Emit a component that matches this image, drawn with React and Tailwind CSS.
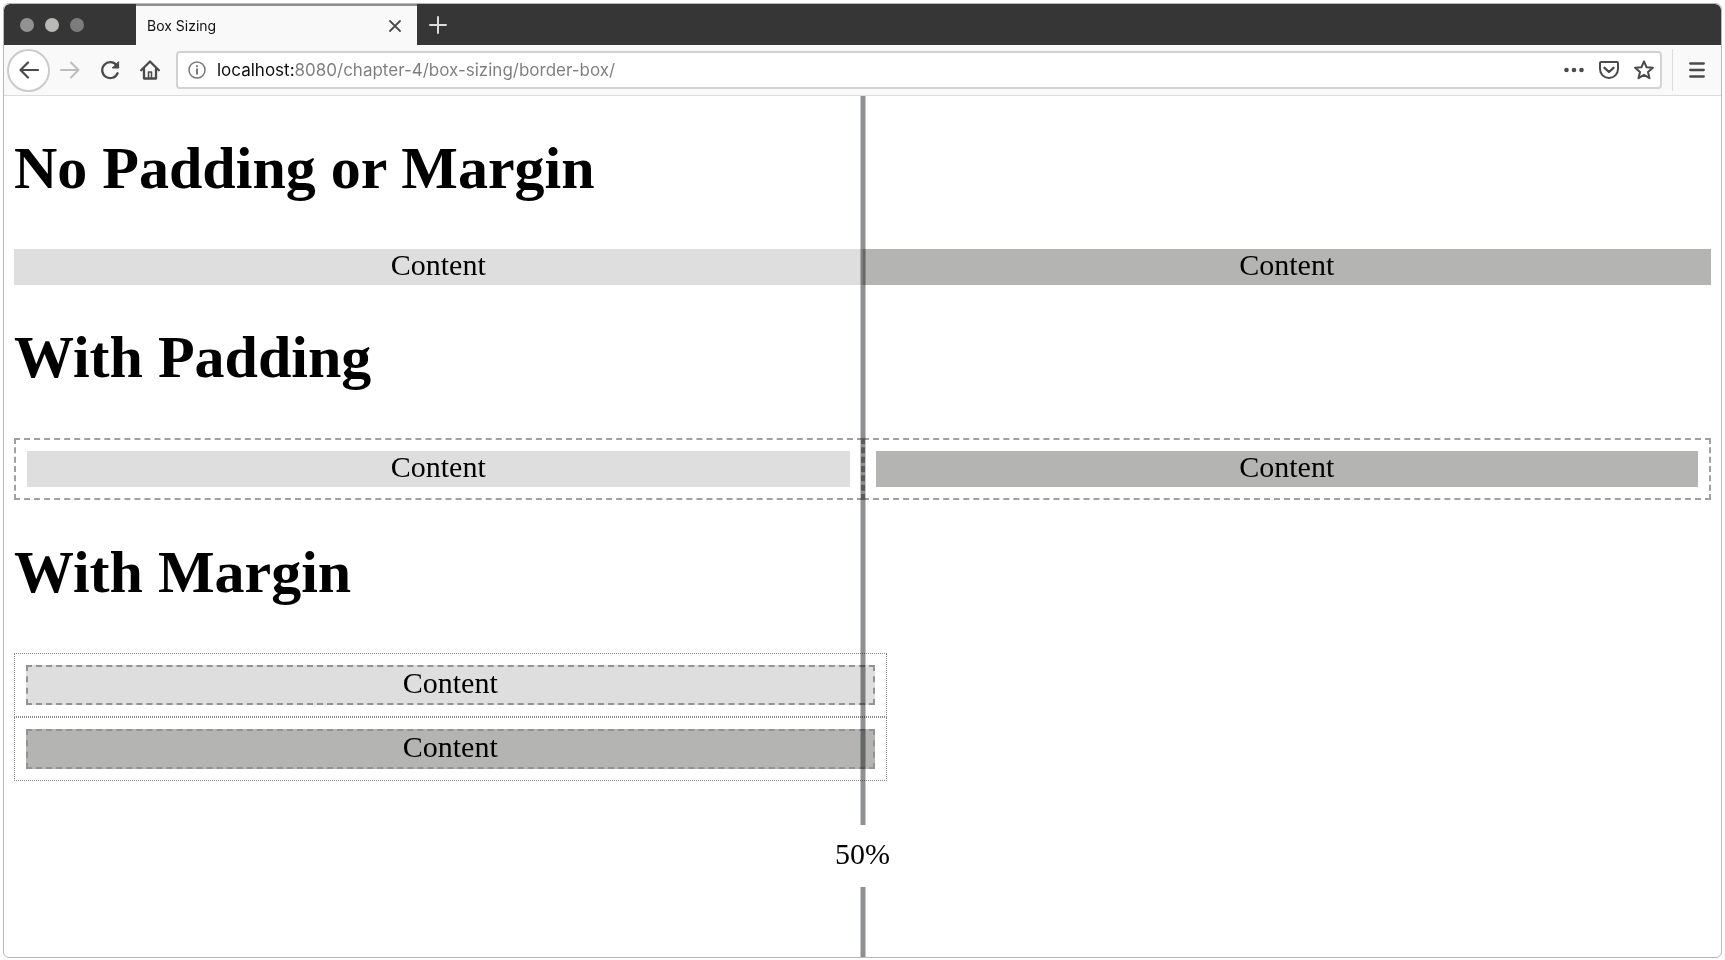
import React from "react";

const stroke = {
  fill: "none",
  stroke: "currentColor",
  strokeWidth: 2,
  strokeLinecap: "round",
  strokeLinejoin: "round",
};

function Icon({ children, className = "size-5", viewBox = "0 0 20 20", ...rest }) {
  return (
    <svg viewBox={viewBox} className={className} aria-hidden="true" {...stroke} {...rest}>
      {children}
    </svg>
  );
}

function TabBar() {
  return (
    <div className="flex h-[41px] items-stretch rounded-t-md bg-[#363636]">
      <div className="flex w-[132px] items-center gap-[11px] pl-4">
        <button aria-label="Close window" className="size-3.5 rounded-full bg-[#929292]" />
        <button aria-label="Minimize window" className="size-3.5 rounded-full bg-[#b9b9b7]" />
        <button aria-label="Zoom window" className="size-3.5 rounded-full bg-[#7c7c7c]" />
      </div>
      <div className="flex w-[281px] items-center justify-between border-t-2 border-[#8e8e8e] bg-[#f9f9fa] pr-3.5 pl-[11px] text-[#111]">
        <span className="text-sm">Box Sizing</span>
        <button aria-label="Close tab" className="text-[#4a4a4a]">
          <Icon className="size-4" viewBox="0 0 16 16" strokeWidth="1.8">
            <path d="M3 3l10 10M13 3L3 13" />
          </Icon>
        </button>
      </div>
      <button aria-label="New tab" className="px-3 text-[#dcdcdc]">
        <Icon className="size-[18px]" viewBox="0 0 18 18">
          <path d="M9 1v16M1 9h16" />
        </Icon>
      </button>
    </div>
  );
}

function Toolbar() {
  return (
    <div className="flex h-[51px] items-center border-b border-[#dcdcdc] bg-[#f9f9fa] pl-[3px] text-[#4a4a4a]">
      <button
        aria-label="Back"
        className="flex size-[43px] items-center justify-center rounded-full border-2 border-[#cbcbcb] bg-white"
      >
        <Icon strokeWidth="2.2">
          <path d="M19 10H1.5M9 2.500L1.500 10L9 17.500" />
        </Icon>
      </button>
      <button aria-label="Forward" className="ml-2 px-0.5 text-[#bdbdbd]">
        <Icon>
          <path d="M1 10h17.500M11 2.500l7.500 7.500l-7.500 7.500" />
        </Icon>
      </button>
      <button aria-label="Reload" className="ml-4 px-0.5">
        <Icon strokeWidth="2.3">
          <path d="M17.600 13.200A8 8 0 1 1 16.600 5.300L18 7" />
          <path d="M18.600 2v6h-6z" fill="currentColor" strokeWidth="1" />
        </Icon>
      </button>
      <button aria-label="Home" className="ml-4 px-0.5">
        <Icon strokeWidth="2.3">
          <path d="M1.200 10.200L10 1.500l8.800 8.700" />
          <path d="M4 9v9.500h12V9" />
          <path d="M8.500 18v-6h3v6" strokeWidth="1.600" />
        </Icon>
      </button>
      <div className="ml-3.5 flex h-[38px] grow items-center rounded-[4px] border-2 border-[#d2d2d2] bg-white pr-1.5 pl-2.5">
        <button aria-label="Site information" className="text-[#777]">
          <Icon className="size-[18px]" viewBox="0 0 18 18" strokeWidth="1.500">
            <circle cx="9" cy="9" r="8" />
            <path d="M9 8.300v4.500M9 5.100v.2" strokeWidth="2" />
          </Icon>
        </button>
        <input
          aria-label="Address"
          type="text"
          defaultValue="localhost:8080/chapter-4/box-sizing/border-box/"
          className="ml-[11px] h-full min-w-0 grow bg-linear-to-r from-[#0c0c0d] from-[77px] to-[#7d7d7d] to-[77px] bg-clip-text text-[17px] text-transparent caret-black outline-none"
        />
        <div className="flex items-center gap-[15px]">
          <button aria-label="Page actions">
            <Icon fill="currentColor" stroke="none">
              <circle cx="2.500" cy="10" r="2.300" />
              <circle cx="10" cy="10" r="2.300" />
              <circle cx="17.500" cy="10" r="2.300" />
            </Icon>
          </button>
          <button aria-label="Save to Pocket">
            <Icon>
              <path d="M2 2h16a1 1 0 0 1 1 1v6a9 9 0 0 1-18 0V3a1 1 0 0 1 1-1z" />
              <path d="M5.500 7.800L10 12l4.500-4.200" strokeWidth="2.300" />
            </Icon>
          </button>
          <button aria-label="Bookmark this page">
            <Icon>
              <path d="M10 1.300l2.500 5.900 6.400.5-4.900 4.200 1.500 6.300L10 14.800l-5.500 3.400L6 11.900 1.100 7.700l6.400-.5z" />
            </Icon>
          </button>
        </div>
      </div>
      <div className="ml-2.5 h-[42px] w-px bg-[#dcdcdc]" />
      <button aria-label="Open menu" className="px-4">
        <Icon className="size-4" viewBox="0 0 16 16" strokeWidth="2.300">
          <path d="M1.200 1.500h13.600M1.200 8h13.600M1.200 14.500h13.600" />
        </Icon>
      </button>
    </div>
  );
}

function Heading({ children }) {
  return <h1 className="pt-[38px] pb-[46px] text-[60px] leading-[69px] font-bold">{children}</h1>;
}

const light = "bg-[#dedede]";
const dark = "bg-[#b4b4b3]";

function Bar({ tone }) {
  return <div className={`h-9 text-center text-[30px] leading-8 ${tone}`}>Content</div>;
}

function PaddedBox({ tone }) {
  return (
    <div className="w-1/2 border-2 border-dashed border-[#a0a0a0] p-[11px]">
      <Bar tone={tone} />
    </div>
  );
}

function MarginBox({ tone }) {
  return (
    <div className="w-[calc(50%+24px)] border border-dotted border-[#8a8a8a] p-[11px]">
      <div className={`border-2 border-dashed border-[#939393] ${tone}`}>
        <Bar tone={tone} />
      </div>
    </div>
  );
}

function HalfwayMarker() {
  return (
    <div className="pointer-events-none absolute inset-y-0 left-1/2 flex -translate-x-1/2 flex-col items-center mix-blend-multiply">
      <div className="w-[5px] grow bg-[#8f9091]" />
      <span className="pt-2.5 pb-3.5 text-[30px] leading-[38px]">50%</span>
      <div className="h-[70px] w-[5px] bg-[#8f9091]" />
    </div>
  );
}

export default function App() {
  return (
    <div className="flex min-h-screen flex-col bg-white p-[3px] pb-0.5 font-['Inter',sans-serif]">
      <div className="flex grow flex-col overflow-hidden rounded-md border border-[#b8b8b8] bg-white">
        <TabBar />
        <Toolbar />
        <main className="relative grow px-2.5 pb-44 font-['Liberation_Serif',serif] text-black">
          <section>
            <Heading>No Padding or Margin</Heading>
            <div className="grid grid-cols-2">
              <Bar tone={light} />
              <Bar tone={dark} />
            </div>
          </section>
          <section>
            <Heading>With Padding</Heading>
            <div className="flex">
              <PaddedBox tone={light} />
              <PaddedBox tone={dark} />
            </div>
          </section>
          <section>
            <Heading>With Margin</Heading>
            <MarginBox tone={light} />
            <MarginBox tone={dark} />
          </section>
          <HalfwayMarker />
        </main>
      </div>
    </div>
  );
}
